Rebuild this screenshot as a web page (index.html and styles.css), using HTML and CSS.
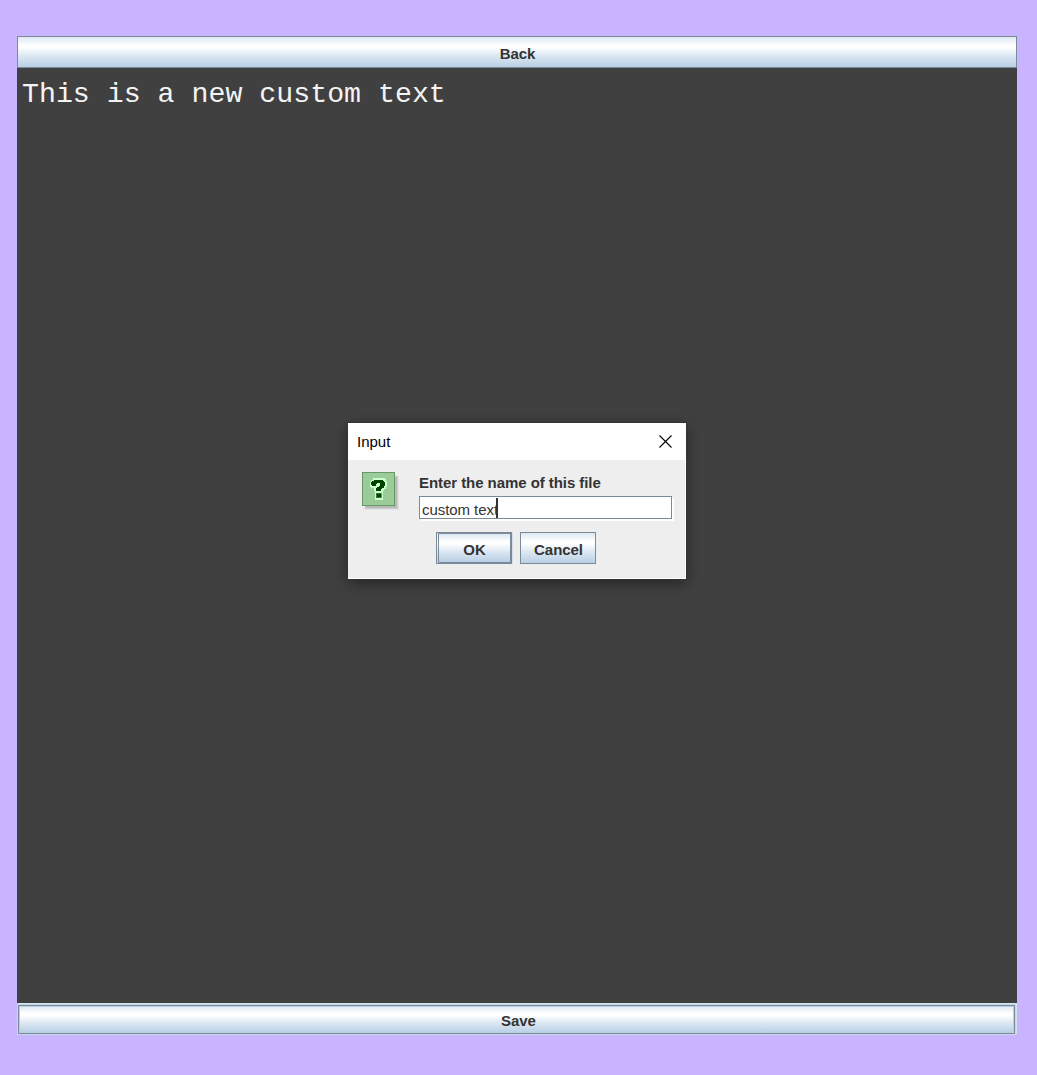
FILE: index.html
```html
<!DOCTYPE html>
<html lang="en">
<head>
<meta charset="utf-8">
<title>Text editor</title>
<link rel="stylesheet" href="styles.css">
</head>
<body>
<main class="editor">
  <button class="bar">Back</button>
  <div class="document">This is a new custom text</div>
  <button class="bar bar-focused">Save</button>
</main>
<section class="dialog" role="dialog" aria-label="Input">
  <header class="titlebar">
    <span>Input</span>
    <svg class="close" width="13" height="13" viewBox="0 0 13 13"><path d="M.5.5l12 12M12.5.5l-12 12" stroke="#000" stroke-width="1.1"/></svg>
  </header>
  <div class="content">
    <svg class="question" width="37" height="38" viewBox="0 0 37 38" shape-rendering="crispEdges">
      <path d="M2 4h35v34H2z" fill="#e2e2e2"/>
      <path d="M3 4h33v33H3z" fill="#cfcfcf"/>
      <path d="M4 5h31v31H4z" fill="#b9b9b9"/>
      <path d="M.5.5h32v33H.5z" fill="#99cc99" stroke="#669966"/>
      <path d="M11 6h12v1h1v2h1v6h-1v2h-2v2h-1v9h-8v-9h-1v-3h-3v-1h-1v-5h1v-2h2z" fill="#ccffcc"/>
      <path d="M12 8h9v1h1v1h1v4h-1v2h-2v1h-1v2h-5v-3h1v-1h2v-1h1v-3h-3v1h-1v2h-4v-1h-1v-3h1v-1h1z" fill="#004400"/>
      <path d="M14 21h6v5h-6z" fill="#669966"/>
      <path d="M14 21h5v5h-5z" fill="#337733"/>
      <path d="M15 22h4v3h-4z" fill="#004400"/>
    </svg>
    <div class="form">
      <label for="filename">Enter the name of this file</label>
      <div class="field" id="filename"><span>custom text</span><i class="caret"></i></div>
    </div>
  </div>
  <footer class="actions">
    <button class="button button-default">OK</button>
    <button class="button">Cancel</button>
  </footer>
</section>
</body>
</html>
```
FILE: styles.css
```css
* { box-sizing: border-box; }
body {
  margin: 0;
  height: 1075px;
  padding: 36px 20px 40px 17px;
  overflow: hidden;
  background: #c8b4ff;
  color: #333;
  font-family: "Liberation Sans", Arial, sans-serif;
}
button {
  margin: 0;
  padding: 3px 0 0 1px;
  border: 1px solid #7a8a99;
  border-radius: 0;
  background: linear-gradient(#dde8f3 0%, #fff 28%, #fff 34%, #dde8f3 62%, #b8cfe5 100%);
  color: #333;
  font: bold 15px/17px "Liberation Sans", Arial, sans-serif;
  letter-spacing: -.06px;
}
.editor { display: flex; flex-direction: column; width: 1000px; height: 999px; }
.bar { height: 32px; flex: none; }
.document {
  flex: 1;
  padding: 10px 5px;
  background: #404040;
  color: #f4f4f4;
  font: 28.25px/32px "Liberation Mono", "Courier New", monospace;
}
.bar-focused {
  height: 29px;
  width: 997px;
  margin: 2px 0 1px 1px;
  padding: 2px 0 0 4px;
  box-shadow: inset 0 0 0 1px #b8cfe5, 0 0 0 1px #c5d9e9, 1px -1px 0 1px #d5e3ef;
}
.dialog {
  position: absolute;
  left: 348px;
  top: 423px;
  width: 338px;
  height: 156px;
  border: solid #fff;
  border-width: 0 1px 1px 0;
  background: #eee;
  box-shadow: 0 0 0 1px #343434, 0 4px 14px rgba(0, 0, 0, .45);
}
.titlebar {
  display: flex;
  justify-content: space-between;
  height: 37px;
  padding: 12px 14px 0 9px;
  background: #fff;
  color: #000;
  font-size: 15px;
  line-height: 13px;
}
.close { margin-right: -.5px; }
.content { display: flex; gap: 20px; padding: 12px 0 0 14px; }
.question { flex: none; }
.form label {
  display: block;
  height: 24px;
  font-size: 15px;
  font-weight: bold;
  line-height: 22px;
  letter-spacing: -.06px;
}
.field {
  display: flex;
  width: 253px;
  height: 23px;
  padding: 1px 2px 0;
  border: 1px solid #7a8a99;
  background: #fff;
  box-shadow: 2px 2px 0 #fff;
  font-size: 15px;
  line-height: 24px;
  letter-spacing: -.06px;
}
.caret { width: 2px; height: 20px; margin-left: -2px; background: #333; }
.actions { display: flex; gap: 8px; padding: 13px 0 0 88px; }
.button { width: 76px; height: 32px; }
.button-default { padding-left: 0; border: 2px solid #7a8a99; box-shadow: 1px 0 0 #d4dfe9; border-left: 3px double #7a8a99; }
```
